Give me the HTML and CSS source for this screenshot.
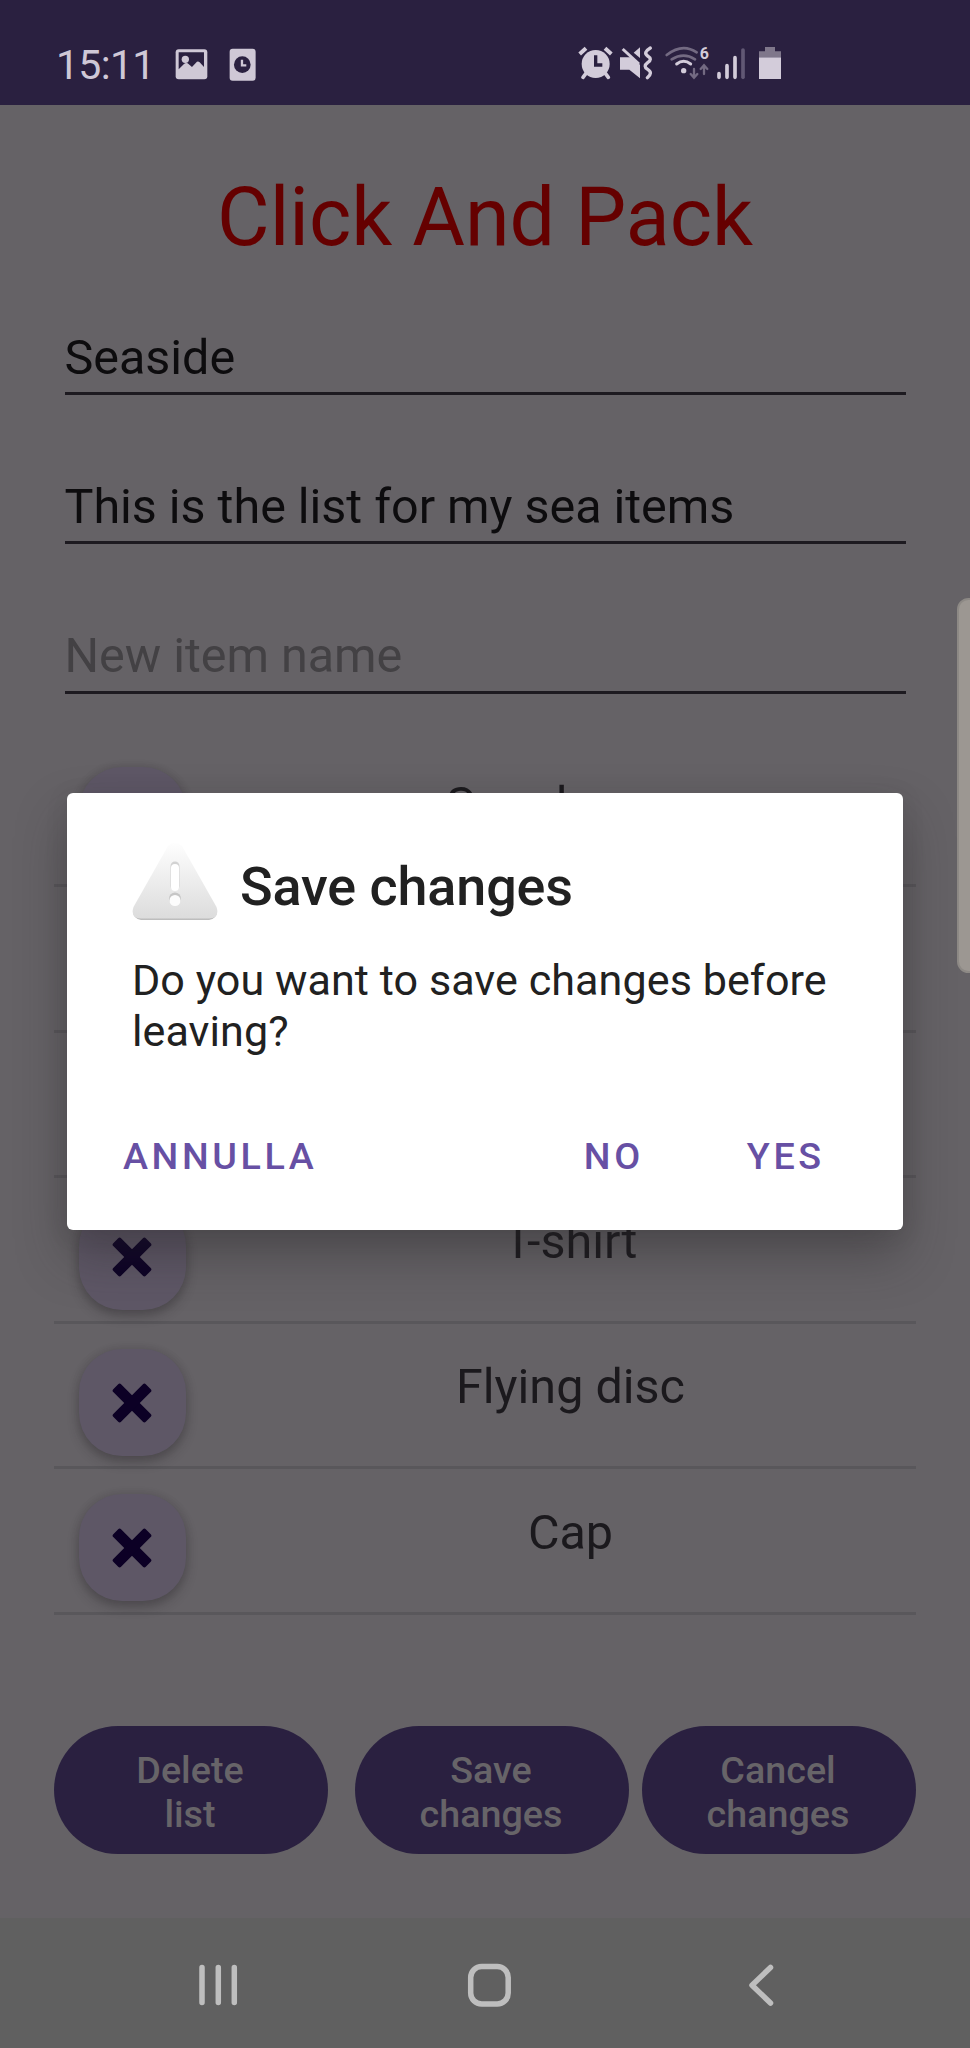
FILE: index.html
```
<!DOCTYPE html>
<html lang="en">
<head>
<meta charset="utf-8">
<title>Click And Pack</title>
<link rel="stylesheet" href="styles.css">
</head>
<body>
<svg class="defs" width="0" height="0" aria-hidden="true">
  <symbol id="cross" viewBox="0 0 40 40">
    <g fill="#0c0025" transform="rotate(45 20 20)">
      <rect x="-3" y="14.500" width="46" height="11" rx="2"/>
      <rect x="14.500" y="-3" width="11" height="46" rx="2"/>
    </g>
  </symbol>
</svg>
<div class="screen">
  <header class="status">
    <span class="clock">15:11</span>
    <svg class="status-left" viewBox="0 0 250 110">
      <rect x="8" y="7" width="95" height="90" rx="9" fill="#cfc8d6"/>
      <path d="M17 16H93V60L80 46Q74 41 69 47L57 60L44 49Q38 46 33 51L17 67Z" fill="#2a2040"/>
      <circle cx="37" cy="37" r="11" fill="#cfc8d6"/>
      <rect x="170" y="5" width="78" height="96" rx="9" fill="#cfc8d6"/>
      <circle cx="208" cy="53" r="25" fill="#2a2040"/>
      <path d="M207 38V55H220" fill="none" stroke="#cfc8d6" stroke-width="7"/>
    </svg>
    <svg class="status-right" viewBox="0 0 720 210">
      <g fill="#d3ccda">
        <circle cx="107" cy="102" r="42"/>
        <path d="M59 72L78 55M154 72L135 55" stroke="#d3ccda" stroke-width="12"/>
        <path d="M78 130L69 142M136 130L145 142" stroke="#d3ccda" stroke-width="11" stroke-linecap="round"/>
        <path d="M107 76V105H127" fill="none" stroke="#2a2040" stroke-width="10"/>
        <path d="M180 82H212L240 104V145L208 119H180Z"/>
        <path d="M188 57L237 102" stroke="#d3ccda" stroke-width="9"/>
        <path d="M240 52V84L221 68Z"/>
        <path d="M271 54Q248 68 263 78Q279 88 263 98Q248 109 263 118Q280 128 262 143" fill="none" stroke="#d3ccda" stroke-width="10" stroke-linecap="round"/>
        <circle cx="371" cy="122" r="8"/>
        <path d="M350 102Q371 86 392 102" fill="none" stroke="#d3ccda" stroke-width="9" stroke-linecap="round"/>
      </g>
      <g fill="none" stroke="#736a82" stroke-width="8" stroke-linecap="round">
        <path d="M335 88Q371 66 405 88"/>
        <path d="M320 75Q367 38 410 67"/>
        <path d="M402 117V141M392 132L402 143L412 132M432 132V108M422 117L432 106L442 117" stroke-width="7"/>
      </g>
      <text class="wifi-gen" x="419" y="88">6</text>
      <g stroke-width="11" stroke-linecap="round">
        <path d="M477 131V142M501 107V142M525 83V142" stroke="#d3ccda"/>
        <path d="M549 60V142" stroke="#615874"/>
      </g>
      <path d="M597 82V64H615V51H645V64H663V82Z" fill="#7f778b"/>
      <rect x="597" y="82" width="66" height="65" fill="#d3ccda"/>
    </svg>
  </header>

  <main class="content">
    <h1 class="title">Click And Pack</h1>
    <div class="fields">
      <div class="field">Seaside</div>
      <div class="field">This is the list for my sea items</div>
      <div class="field hint">New item name</div>
    </div>
    <div class="list">
      <div class="row"><div class="fab"><svg><use href="#cross"/></svg></div><span class="name">Sunglasses</span></div>
      <div class="row"><div class="fab"><svg><use href="#cross"/></svg></div></div>
      <div class="row"><div class="fab"><svg><use href="#cross"/></svg></div></div>
      <div class="row"><div class="fab"><svg><use href="#cross"/></svg></div><span class="name">T-shirt</span></div>
      <div class="row"><div class="fab"><svg><use href="#cross"/></svg></div><span class="name">Flying disc</span></div>
      <div class="row"><div class="fab"><svg><use href="#cross"/></svg></div><span class="name">Cap</span></div>
    </div>
    <div class="actions">
      <div class="pill first">Delete<br>list</div>
      <div class="pill">Save<br>changes</div>
      <div class="pill">Cancel<br>changes</div>
    </div>
  </main>

  <nav class="navbar">
    <svg viewBox="0 0 970 130" fill="none" stroke="#bebebe" stroke-width="5.500" stroke-linecap="round" stroke-linejoin="round">
      <path d="M202 49.500V84.500M218.300 49.500V84.500M234.300 49.500V84.500"/>
      <rect x="470.700" y="48.500" width="37.500" height="37.500" rx="11"/>
      <path d="M770.500 49.500L752 67.200L770.500 85"/>
    </svg>
  </nav>

  <div class="edge-handle"></div>

  <section class="dialog">
    <div class="dialog-head">
      <svg class="warn" viewBox="0 0 86 80">
        <defs>
          <linearGradient id="tri" x1="0" y1="0" x2="0" y2="1">
            <stop offset="0" stop-color="#fefefe"/>
            <stop offset="1" stop-color="#dcdcdc"/>
          </linearGradient>
        </defs>
        <path d="M2 66Q-1 76 9 78H77Q87 76 84 66Z" fill="#bdbdbd"/>
        <path d="M36 4Q43 -3 50 4L84.500 65Q88 76 77 76.500H9Q-2 76 1.500 65Z" fill="url(#tri)"/>
        <path d="M43 24V44" stroke="#d2d2d2" stroke-width="9" stroke-linecap="round"/>
        <path d="M43 26V45" stroke="#fff" stroke-width="8" stroke-linecap="round"/>
        <circle cx="43" cy="56.500" r="6" fill="#c6c6c6"/>
        <circle cx="43" cy="58.500" r="5.500" fill="#fcfcfc"/>
      </svg>
      <h2 class="dialog-title">Save changes</h2>
    </div>
    <p class="message">Do you want to save changes before leaving?</p>
    <div class="dialog-actions">
      <span class="btn">ANNULLA</span>
      <span class="btn no">NO</span>
      <span class="btn yes">YES</span>
    </div>
  </section>
</div>
</body>
</html>
```
FILE: styles.css
```
* { box-sizing: border-box; }
body { margin: 0; font-family: Roboto, "Liberation Sans", sans-serif; }
.defs { position: absolute; }
.screen {
  position: relative;
  display: flex;
  flex-direction: column;
  width: 970px;
  height: 2048px;
  overflow: hidden;
  background: #656266;
}
.status {
  display: flex;
  height: 105px;
  padding-left: 56px;
  background: #2a2040;
}
.clock {
  width: 117px;
  padding-top: 41px;
  font-size: 41px;
  line-height: 48px;
  letter-spacing: -.700px;
  color: #cfc8d6;
  white-space: nowrap;
}
.status-left { width: 83.300px; height: 36.700px; margin-top: 46.700px; }
.status-right { width: 240px; height: 70px; margin: 30px 0 0 303.700px; }
.wifi-gen { font-size: 48px; font-weight: 700; fill: #d3ccda; }

.content { flex: 1; padding: 66px 54px 0; }
.title {
  margin: 0;
  font-size: 80.800px;
  font-weight: 400;
  line-height: 94px;
  text-align: center;
  color: #650000;
}
.fields {
  display: flex;
  flex-direction: column;
  gap: 83px;
  padding: 64px 10.500px 0;
}
.field {
  height: 66.200px;
  padding: 0 0 6px;
  border-bottom: 3px solid #1d1a20;
  font-size: 48.500px;
  line-height: 57px;
  letter-spacing: -.030px;
  color: #0d0c0e;
}
.field.hint { color: #434144; }
.list { margin-top: 48.200px; }
.row {
  display: flex;
  height: 145.500px;
  padding-left: 24.500px;
  border-bottom: 3px solid #59575b;
}
.fab {
  display: flex;
  align-items: center;
  justify-content: center;
  flex: none;
  width: 107px;
  height: 107px;
  margin-top: 24.800px;
  border-radius: 43px;
  background: #5e5766;
  box-shadow: 0 6px 12px rgba(30, 28, 30, .3), 0 0 8px rgba(30, 28, 30, .12);
}
.fab svg { width: 40px; height: 40px; margin-top: 1px; }
.name {
  flex: 1;
  margin-left: 39.500px;
  padding-top: 34.300px;
  font-size: 48.500px;
  line-height: 57px;
  text-align: center;
  color: #1b191d;
}
.actions { display: flex; gap: 13px; margin-top: 111px; }
.pill {
  width: 274px;
  height: 128px;
  padding: 22px 2px 0 0;
  border-radius: 64px;
  background: #2a2040;
  font-size: 37.700px;
  font-weight: 500;
  line-height: 44.200px;
  text-align: center;
  color: #676468;
}
.pill.first { margin-right: 14px; }

.navbar { height: 130px; background: #606060; }
.navbar svg { display: block; width: 970px; height: 130px; }

.edge-handle {
  position: absolute;
  top: 598px;
  right: -10px;
  width: 23px;
  height: 375px;
  border: 2px solid #8d8985;
  border-radius: 15px;
  background: #9c9792;
}

.dialog {
  position: absolute;
  top: 793px;
  left: 67.300px;
  width: 835.500px;
  height: 436.500px;
  padding: 49px 57px 0 64.700px;
  border-radius: 6px;
  background: #fff;
  box-shadow: 0 26px 50px rgba(40, 38, 40, .38), 0 4px 22px rgba(40, 38, 40, .12);
}
.dialog-head { display: flex; }
.warn { width: 86px; height: 80px; }
.dialog-title {
  margin: 3px 0 0 22px;
  font-size: 53.900px;
  font-weight: 500;
  line-height: 84px;
  letter-spacing: -.100px;
  white-space: nowrap;
  color: #212121;
}
.message {
  margin: 26px 0 0;
  font-size: 43.100px;
  line-height: 51px;
  letter-spacing: .060px;
  color: #212121;
}
.dialog-actions { display: flex; margin: 76.500px 0 0 -9px; }
.btn {
  font-size: 37.700px;
  font-weight: 500;
  line-height: 44px;
  letter-spacing: 3.600px;
  color: #6750a4;
}
.btn.no { margin-left: 266.500px; }
.btn.yes { margin-left: 103px; }
```
